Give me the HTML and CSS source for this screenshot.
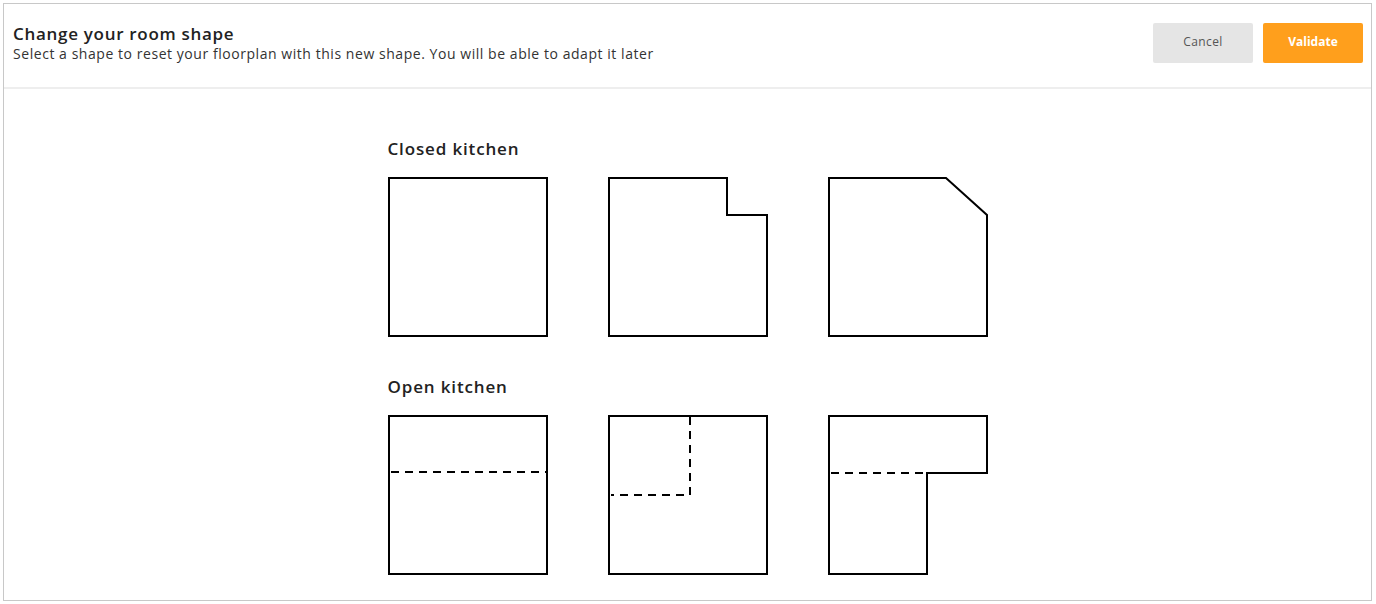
FILE: index.html
```html
<!DOCTYPE html>
<html lang="en">
<head>
<meta charset="utf-8">
<title>Change your room shape</title>
<link rel="stylesheet" href="styles.css">
</head>
<body>
<div class="panel">
  <header class="head">
    <div class="head-text">
      <h1 class="title">Change your room shape</h1>
      <p class="subtitle">Select a shape to reset your floorplan with this new shape. You will be able to adapt it later</p>
    </div>
    <div class="actions">
      <button class="btn btn-cancel">Cancel</button>
      <button class="btn btn-validate">Validate</button>
    </div>
  </header>
  <main class="content">
    <section class="group">
      <h2 class="group-title">Closed kitchen</h2>
      <div class="shapes">
        <svg class="shape" width="160" height="160" viewBox="0 0 160 160"><rect class="wall crisp" x="1" y="1" width="158" height="158"/></svg>
        <svg class="shape" width="160" height="160" viewBox="0 0 160 160"><path class="wall crisp" d="M1 1 H119 V38 H159 V159 H1 Z"/></svg>
        <svg class="shape" width="160" height="160" viewBox="0 0 160 160"><path class="wall" d="M1 1 H118 L159 38 V159 H1 Z"/></svg>
      </div>
    </section>
    <section class="group group-open">
      <h2 class="group-title">Open kitchen</h2>
      <div class="shapes">
        <svg class="shape" width="160" height="160" viewBox="0 0 160 160"><rect class="wall crisp" x="1" y="1" width="158" height="158"/><path class="dash crisp" d="M3 57 H158"/></svg>
        <svg class="shape" width="160" height="160" viewBox="0 0 160 160"><rect class="wall crisp" x="1" y="1" width="158" height="158"/><path class="dash crisp" d="M82 2 V80 H3"/></svg>
        <svg class="shape" width="160" height="160" viewBox="0 0 160 160"><path class="wall crisp" d="M1 1 H159 V58 H99 V159 H1 Z"/><path class="dash crisp" d="M3 58 H98"/></svg>
      </div>
    </section>
  </main>
</div>
</body>
</html>
```
FILE: styles.css
```css
html, body {
  margin: 0;
  background: #fff;
}
body {
  padding: 3px 4px 3px 3px;
  font-family: "Open Sans", "Liberation Sans", sans-serif;
  color: #222;
}
.panel {
  height: 598px;
  box-sizing: border-box;
  border: 1px solid #c8c8c8;
  display: flex;
  flex-direction: column;
}
.head {
  height: 85px;
  box-sizing: border-box;
  border-bottom: 2px solid #eeeeee;
  display: flex;
  justify-content: space-between;
  align-items: flex-start;
  padding: 19px 8px 0 9px;
}
.title {
  margin: 0;
  font-size: 17px;
  line-height: 22px;
  font-weight: 600;
  letter-spacing: 0.7px;
  color: #222;
}
.subtitle {
  margin: 0;
  font-size: 14px;
  line-height: 18px;
  letter-spacing: 0.55px;
  color: #333;
}
.actions {
  display: flex;
  gap: 10px;
}
.btn {
  width: 100px;
  height: 40px;
  border: none;
  border-radius: 2px;
  font-family: inherit;
  font-size: 12px;
  padding: 0 0 3px;
  cursor: pointer;
}
.btn-cancel {
  background: #e5e5e5;
  color: #555;
  letter-spacing: 0.4px;
}
.btn-validate {
  background: #ff9f1c;
  color: #fff;
  font-weight: 700;
}
.content {
  width: 600px;
  margin: 0 auto;
  padding-top: 50px;
}
.group-title {
  margin: 0 0 18px;
  font-size: 17px;
  line-height: 20px;
  font-weight: 600;
  letter-spacing: 0.85px;
  color: #222;
}
.group-open {
  margin-top: 40px;
}
.shapes {
  display: flex;
  gap: 60px;
}
.shape {
  display: block;
}
.wall {
  fill: none;
  stroke: #000;
  stroke-width: 2;
}
.dash {
  fill: none;
  stroke: #000;
  stroke-width: 2;
  stroke-dasharray: 8 6;
}
.crisp {
  shape-rendering: crispEdges;
}
```
